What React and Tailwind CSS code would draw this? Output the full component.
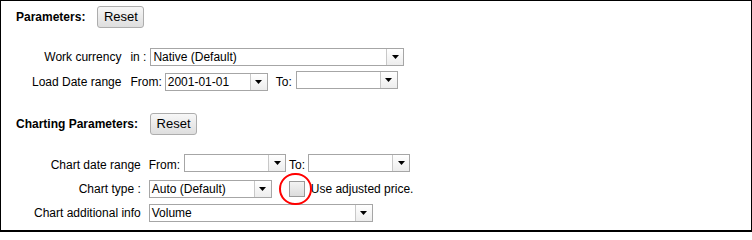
import React from 'react';

function Arrow() {
  return (
    <svg width="7" height="4" viewBox="0 0 7 4">
      <path d="M0 0h7L3.5 4z" fill="#000" />
    </svg>
  );
}

function Select({ value = '', w }) {
  return (
    <div className={`inline-flex h-[18px] border border-[#a6a6a6] bg-white ${w}`}>
      <span className="flex-1 pl-[2px] leading-[16px] text-black whitespace-nowrap overflow-hidden">{value}</span>
      <span className="w-[17px] border-l border-[#c8c8c8] bg-gradient-to-b from-white to-[#ededed] flex items-center justify-center">
        <Arrow />
      </span>
    </div>
  );
}

function ResetButton() {
  return (
    <button
      type="button"
      className="h-[22px] w-[47px] rounded-[3px] border border-[#adadad] bg-gradient-to-b from-[#f7f7f7] to-[#dedede] text-[13px] leading-[20px] text-black"
    >
      Reset
    </button>
  );
}

export default function App() {
  return (
    <div
      className="w-[752px] h-[232px] bg-white border-l border-t border-r border-b-2 border-black text-[12px] text-black"
      style={{ fontFamily: '"Liberation Sans", Arial, sans-serif' }}
    >
      <div className="pl-[15px] pt-[5px]">
        {/* Parameters */}
        <div className="flex items-center h-[22px] gap-[12px]">
          <span className="font-bold">Parameters:</span>
          <ResetButton />
        </div>

        <div className="mt-[16px] pl-[16px] grid grid-cols-[auto_1fr] gap-x-[9px]">
          <div className="h-[25px] flex items-center justify-end">Work currency</div>
          <div className="h-[25px] flex items-center gap-[4px]">
            <span>in :</span>
            <Select value="Native (Default)" w="w-[254px]" />
          </div>

          <div className="h-[25px] flex items-center justify-end">Load Date range</div>
          <div className="h-[25px] flex items-center">
            <span>From:</span>
            <span className="ml-[3px]"><Select value="2001-01-01" w="w-[103px]" /></span>
            <span className="ml-[8px]">To:</span>
            <span className="ml-[4px]"><Select w="w-[102px]" /></span>
          </div>
        </div>

        {/* Charting Parameters */}
        <div className="mt-[19px] flex items-center h-[22px] gap-[12px]">
          <span className="font-bold">Charting Parameters:</span>
          <ResetButton />
        </div>

        <div className="mt-[18px] pl-[18px] grid grid-cols-[auto_1fr] gap-x-[8px]">
          <div className="h-[24px] flex items-center justify-end">Chart date range</div>
          <div className="h-[24px] flex items-center">
            <span>From:</span>
            <span className="ml-[4px]"><Select w="w-[102px]" /></span>
            <span className="ml-[3px]">To:</span>
            <span className="ml-[3px]"><Select w="w-[102px]" /></span>
          </div>

          <div className="h-[24px] flex items-center justify-end">Chart type :</div>
          <div className="h-[24px] flex items-center">
            <Select value="Auto (Default)" w="w-[123px]" />
            <span className="relative ml-[17px] w-[16px] h-[16px] border border-[#9a9a9a] bg-gradient-to-b from-[#f3f3f3] to-[#dcdcdc]">
              <span className="absolute left-[-11px] top-[-9px] w-[33px] h-[32px] rounded-full border-2 border-[#ff0000]" />
            </span>
            <span className="ml-[6px]">Use adjusted price.</span>
          </div>

          <div className="h-[24px] flex items-center justify-end">Chart additional info</div>
          <div className="h-[24px] flex items-center">
            <Select value="Volume" w="w-[224px]" />
          </div>
        </div>
      </div>
    </div>
  );
}
